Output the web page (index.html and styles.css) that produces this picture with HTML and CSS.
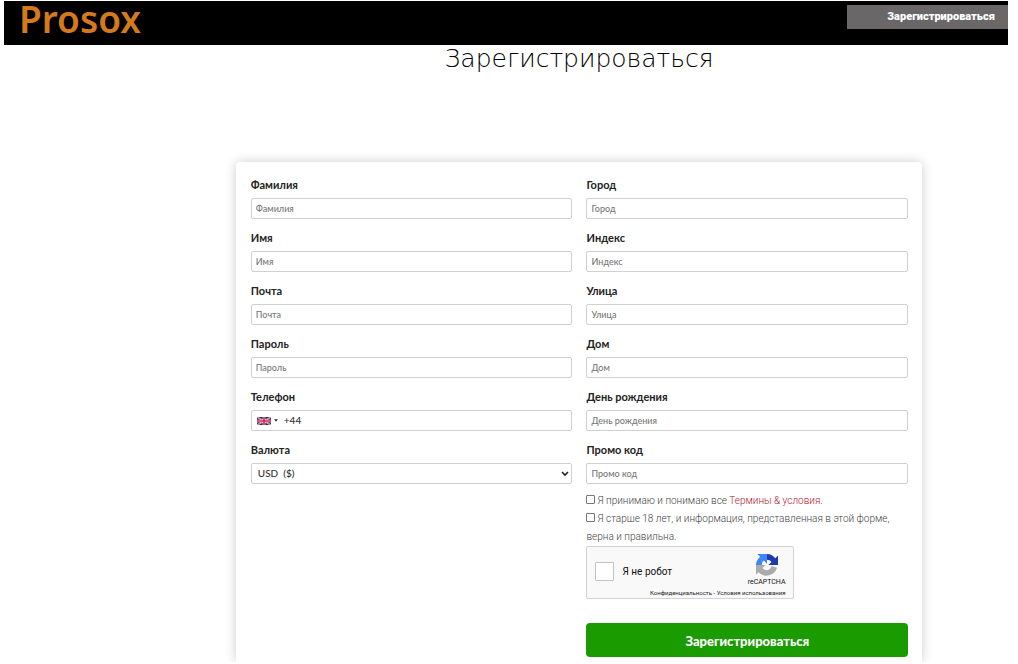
FILE: index.html
```html
<!DOCTYPE html>
<html lang="ru">
<head>
<meta charset="utf-8">
<meta name="viewport" content="width=device-width, initial-scale=1">
<title>Prosox – Зарегистрироваться</title>
<link rel="stylesheet" href="styles.css">
</head>
<body>
<header class="topbar">
  <a class="logo" href="#">Prosox</a>
  <a class="topbar-link" href="#signup">Зарегистрироваться</a>
</header>
<main class="content">
  <h1 class="title">Зарегистрироваться</h1>
  <div class="card-area">
    <form class="card" id="signup">
      <div class="column">
        <div class="field"><label for="surname">Фамилия</label><input class="control" id="surname" type="text" placeholder="Фамилия"></div>
        <div class="field"><label for="name">Имя</label><input class="control" id="name" type="text" placeholder="Имя"></div>
        <div class="field"><label for="mail">Почта</label><input class="control" id="mail" type="email" placeholder="Почта"></div>
        <div class="field"><label for="password">Пароль</label><input class="control" id="password" type="password" placeholder="Пароль"></div>
        <div class="field">
          <label for="phone">Телефон</label>
          <div class="control phone">
            <button class="country" type="button" aria-label="Великобритания">
              <svg class="flag" viewBox="0 0 28 16" aria-hidden="true">
                <path fill="#252a63" d="M0 0h28v16H0z"/>
                <path stroke="#fff" stroke-width="3" d="M0 0l28 16M28 0L0 16"/>
                <path stroke="#d02045" stroke-width="1.4" d="M0 0l28 16M28 0L0 16"/>
                <path stroke="#fff" stroke-width="5" d="M14 0v16M0 8h28"/>
                <path stroke="#d02045" stroke-width="3.2" d="M14 0v16M0 8h28"/>
              </svg>
              <svg class="caret" viewBox="0 0 6 4" aria-hidden="true"><path fill="#333" d="M0 0h6L3 4z"/></svg>
            </button>
            <input class="phone-input" id="phone" type="tel" value="+44">
          </div>
        </div>
        <div class="field">
          <label for="currency">Валюта</label>
          <div class="select-wrap">
            <select class="control select" id="currency"><option>USD &nbsp;($)</option></select>
            <svg class="chevron" viewBox="0 0 8 6" aria-hidden="true"><path fill="none" stroke="#222" stroke-width="1.6" d="M1 1l3 3 3-3"/></svg>
          </div>
        </div>
      </div>
      <div class="column">
        <div class="field"><label for="city">Город</label><input class="control" id="city" type="text" placeholder="Город"></div>
        <div class="field"><label for="zip">Индекс</label><input class="control" id="zip" type="text" placeholder="Индекс"></div>
        <div class="field"><label for="street">Улица</label><input class="control" id="street" type="text" placeholder="Улица"></div>
        <div class="field"><label for="house">Дом</label><input class="control" id="house" type="text" placeholder="Дом"></div>
        <div class="field"><label for="birthday">День рождения</label><input class="control" id="birthday" type="text" placeholder="День рождения"></div>
        <div class="field"><label for="promo">Промо код</label><input class="control" id="promo" type="text" placeholder="Промо код"></div>
        <div class="agreements">
          <div><input class="tick" id="terms" type="checkbox"><label for="terms">Я принимаю и понимаю все <a href="#">Термины &amp; условия</a>.</label></div>
          <div><input class="tick" id="age" type="checkbox"><label for="age">Я старше 18 лет, и информация, представленная в этой форме, верна и правильна.</label></div>
        </div>
        <div class="captcha">
          <div class="captcha-check"><input class="captcha-box" id="robot" type="checkbox"><label for="robot">Я не робот</label></div>
          <div class="captcha-brand">
            <svg class="captcha-logo" viewBox="0 0 64 64" aria-hidden="true">
              <path fill="#1c3aa9" d="M64 32V4l-8 8A32 32 0 0 0 32 0v17c6 0 10 2 13 6l-9 9z"/>
              <path fill="#4285f4" d="M32 0H4l8 8A32 32 0 0 0 0 32h17c0-6 2-10 6-13l9 9z"/>
              <path fill="#ababab" d="M0 32v28l7-7a32 32 0 0 0 54-13L45 35c-2 8-7 12-13 12-6 0-10-2-13-6l9-9z"/>
            </svg>
            <span class="captcha-name">reCAPTCHA</span>
          </div>
          <div class="captcha-links"><a href="#">Конфиденциальность</a> - <a href="#">Условия использования</a></div>
        </div>
        <button class="submit" type="submit">Зарегистрироваться</button>
      </div>
    </form>
  </div>
</main>
</body>
</html>
```
FILE: styles.css
```css
* { box-sizing: border-box; }

body {
  margin: 0;
  padding: 1px 10px 2px 4px;
  min-height: 100vh;
  display: flex;
  flex-direction: column;
  background: #fff;
  color: #222;
  font-family: Lato, sans-serif;
}

a { text-decoration: none; }

.topbar {
  display: flex;
  justify-content: space-between;
  align-items: flex-start;
  min-height: 44px;
  padding-left: 15px;
  background: #000;
}

.logo {
  color: #d57a1c;
  font: 600 37px/36px "Noto Sans", sans-serif;
}

.topbar-link {
  margin-top: 4px;
  padding: 0 13px 0 40px;
  background: #696767;
  color: #fff;
  font: 900 11px/24px Roboto, sans-serif;
}

.content {
  flex: 1;
  display: flex;
  flex-direction: column;
  padding-left: 146px;
}

.title {
  margin: 0;
  text-align: center;
  color: #000;
  font: 200 25px/28px "DejaVu Sans Light", "DejaVu Sans", sans-serif;
}

.card-area {
  flex: 1;
  display: flex;
  justify-content: center;
  margin-top: 69px;
  padding-top: 20px;
  overflow: hidden;
}

.card {
  width: 80%;
  display: grid;
  grid-template-columns: 1fr 1fr;
  gap: 14px;
  padding: 14px 14px 5px 15px;
  border-radius: 4px 4px 0 0;
  box-shadow: 0 0 12px rgba(0, 0, 0, 0.2);
}

.field {
  height: 53px;
}

.field label {
  display: block;
  height: 22px;
  font-weight: 700;
  font-size: 11px;
  line-height: 17px;
}

.control {
  display: block;
  width: 100%;
  height: 21px;
  padding: 0 4px;
  border: 1px solid #d0d0d0;
  border-radius: 2px;
  background: #fff;
  color: #333;
  font: 500 9px/19px Lato, sans-serif;
}

.control::placeholder {
  color: #777;
  opacity: 1;
}

.phone {
  display: flex;
  align-items: center;
  gap: 6px;
  padding-left: 5px;
}

.country {
  display: flex;
  align-items: center;
  gap: 3px;
  padding: 0;
  border: 0;
  background: none;
}

.flag { width: 14px; height: 8px; }

.caret { width: 4px; height: 3px; }

.phone-input {
  flex: 1;
  min-width: 0;
  padding: 0;
  border: 0;
  background: none;
  color: #333;
  font: 500 10px/19px Lato, sans-serif;
}

.select-wrap { position: relative; }

.select {
  appearance: none;
  padding-left: 6px;
  font-size: 10px;
}

.chevron {
  position: absolute;
  right: 3px;
  top: 8px;
  width: 8px;
  height: 6px;
  pointer-events: none;
}

.agreements {
  margin-top: -2px;
  color: #444;
  font: 300 10px/18px Roboto, sans-serif;
}

.agreements a { color: #b3122d; }

.tick {
  appearance: none;
  width: 9px;
  height: 9px;
  margin: 0 2px 0 0;
  border: 1px solid #777;
  border-radius: 1px;
  background: #fff;
}

.captcha {
  display: grid;
  grid-template-columns: 1fr auto;
  width: 208px;
  height: 53px;
  padding: 7px 8px 0;
  border: 1px solid #d3d3d3;
  border-radius: 2px;
  background: #f9f9f9;
  color: #111;
  font-family: Roboto, sans-serif;
}

.captcha-check {
  display: flex;
  align-items: center;
  gap: 8px;
  font-size: 10px;
}

.captcha-box {
  appearance: none;
  width: 19px;
  height: 19px;
  margin: 0;
  border: 1px solid #c1c1c1;
  border-radius: 1px;
  background: #fff;
}

.captcha-brand {
  display: flex;
  flex-direction: column;
  align-items: center;
  gap: 2px;
}

.captcha-logo { width: 22px; height: 22px; }

.captcha-name {
  font-size: 7px;
  line-height: 9px;
}

.captcha-links {
  grid-column: 1 / -1;
  text-align: right;
  font-size: 6px;
  line-height: 7px;
}

.captcha-links a { color: #222; }

.submit {
  display: block;
  width: 100%;
  height: 34px;
  margin-top: 24px;
  border: 0;
  border-radius: 4px;
  background: #1a9c00;
  color: #fff;
  font: 900 13px/34px Lato, sans-serif;
}
```
